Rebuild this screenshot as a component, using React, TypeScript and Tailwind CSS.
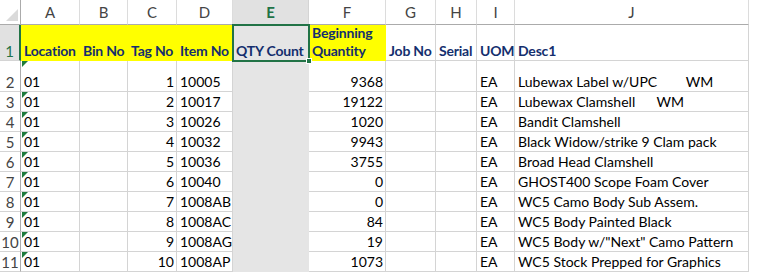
import React from "react";

const cols = ["A", "B", "C", "D", "E", "F", "G", "H", "I", "J"];

type Row = {
  loc: string;
  tag: number;
  item: string;
  qty: number;
  uom: string;
  desc: string;
};

const rows: Row[] = [
  { loc: "01", tag: 1, item: "10005", qty: 9368, uom: "EA", desc: "Lubewax Label w/UPC        WM" },
  { loc: "01", tag: 2, item: "10017", qty: 19122, uom: "EA", desc: "Lubewax Clamshell      WM" },
  { loc: "01", tag: 3, item: "10026", qty: 1020, uom: "EA", desc: "Bandit Clamshell" },
  { loc: "01", tag: 4, item: "10032", qty: 9943, uom: "EA", desc: "Black Widow/strike 9 Clam pack" },
  { loc: "01", tag: 5, item: "10036", qty: 3755, uom: "EA", desc: "Broad Head Clamshell" },
  { loc: "01", tag: 6, item: "10040", qty: 0, uom: "EA", desc: "GHOST400 Scope Foam Cover" },
  { loc: "01", tag: 7, item: "1008AB", qty: 0, uom: "EA", desc: "WC5 Camo Body Sub Assem." },
  { loc: "01", tag: 8, item: "1008AC", qty: 84, uom: "EA", desc: "WC5 Body Painted Black" },
  { loc: "01", tag: 9, item: "1008AG", qty: 19, uom: "EA", desc: 'WC5 Body w/"Next" Camo Pattern' },
  { loc: "01", tag: 10, item: "1008AP", qty: 1073, uom: "EA", desc: "WC5 Stock Prepped for Graphics" },
];

const cell = "border-r border-b border-[#d4d4d4] flex items-end whitespace-pre overflow-visible leading-[18px]";
const left = `${cell} pl-[3px]`;
const right = `${cell} justify-end pr-[2px]`;
const selCol = "bg-[#e5e5e5] border-b border-r border-[#e5e5e5]";
const hdr = "font-bold text-[#142f6e] tracking-[-0.2px]";

function Tri() {
  return (
    <span className="absolute left-[1px] top-0 w-0 h-0 border-t-[6px] border-t-[#1e7b3c] border-r-[6px] border-r-transparent" />
  );
}

export default function App() {
  return (
    <div
      className="relative w-[759px] h-[273px] bg-white overflow-hidden text-[14px] text-black"
      style={{ fontFamily: "Lato, 'Liberation Sans', sans-serif" }}
    >
      <div className="grid w-[749px] grid-cols-[21px_59px_48px_49px_56px_76px_77px_50px_41px_38px_234px] grid-rows-[25px_36px_31px_repeat(9,20px)]">
        {/* header row */}
        <div className="relative bg-white border-r border-b border-r-[#ababab] border-b-[#ababab]">
          <span className="absolute right-[2px] bottom-[3px] w-0 h-0 border-b-[12px] border-b-[#dadada] border-l-[12px] border-l-transparent" />
        </div>
        {cols.map((c) =>
          c === "E" ? (
            <div
              key={c}
              className="flex items-center justify-center bg-[#e1e1e1] border-r border-b border-r-[#d4d4d4] border-b-[#217346] text-[#217346] font-bold text-[15px]"
            >
              {c}
            </div>
          ) : (
            <div
              key={c}
              className="flex items-center justify-center bg-white border-r border-b border-r-[#dcdcdc] border-b-[#ababab] text-[#444] text-[15px]"
            >
              {c}
            </div>
          )
        )}

        {/* row 1 */}
        <div className="flex items-end justify-center bg-[#e1e1e1] border-b border-b-[#d4d4d4] border-r-2 border-r-[#217346] text-[#217346] text-[15px] leading-[18px]">
          1
        </div>
        <div className={`${left} bg-[#ffff00] border-[#ffff00] ${hdr}`}>Location</div>
        <div className={`${left} bg-[#ffff00] border-[#ffff00] ${hdr}`}>Bin No</div>
        <div className={`${left} bg-[#ffff00] border-[#ffff00] ${hdr}`}>Tag No</div>
        <div className={`${left} bg-[#ffff00] border-[#ffff00] ${hdr}`}>Item No</div>
        <div className={`${left} bg-[#e5e5e5] border-[#e5e5e5] ${hdr}`}>QTY Count</div>
        <div className={`${left} bg-[#ffff00] border-[#ffff00] ${hdr} flex-col !items-start justify-end`}>
          <span>Beginning</span>
          <span>Quantity</span>
        </div>
        <div className={`${left} ${hdr}`}>Job No</div>
        <div className={`${left} ${hdr}`}>Serial</div>
        <div className={`${left} ${hdr}`}>UOM</div>
        <div className={`${left} ${hdr}`}>Desc1</div>

        {/* data rows */}
        {rows.map((r, i) => (
          <React.Fragment key={i}>
            <div className="flex items-end justify-center bg-white border-r border-b border-r-[#ababab] border-b-[#d4d4d4] text-[#444] text-[15px] leading-[18px]">
              {i + 2}
            </div>
            <div className={`${left} relative`}>
              <Tri />
              {r.loc}
            </div>
            <div className={left}></div>
            <div className={right}>{r.tag}</div>
            <div className={left}>{r.item}</div>
            <div className={selCol}></div>
            <div className={right}>{r.qty}</div>
            <div className={left}></div>
            <div className={left}></div>
            <div className={left}>{r.uom}</div>
            <div className={left}>{r.desc}</div>
          </React.Fragment>
        ))}
      </div>

      {/* active cell E1 */}
      <div className="absolute left-[232px] top-[24px] w-[78px] h-[38px] border-2 border-[#217346] pointer-events-none" />
      <div className="absolute left-[306px] top-[58px] w-[6px] h-[6px] bg-[#217346] border border-white" />
    </div>
  );
}
